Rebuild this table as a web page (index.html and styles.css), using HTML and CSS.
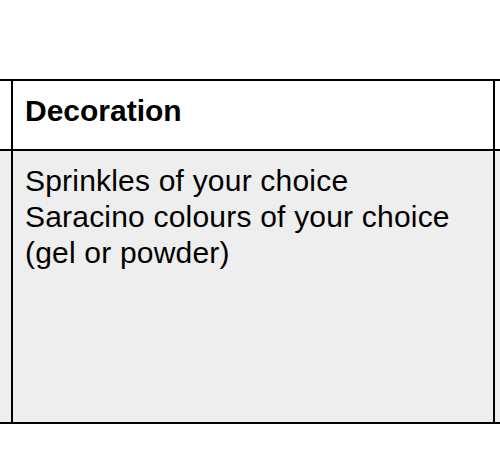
FILE: index.html
```html
<!DOCTYPE html>
<html>
<head>
<meta charset="utf-8">
<link rel="stylesheet" href="styles.css">
</head>
<body>
<div class="table">
  <div class="row head">
    <div class="stub"></div>
    <div class="cell"><strong>Decoration</strong></div>
    <div class="stub"></div>
  </div>
  <div class="row body">
    <div class="stub"></div>
    <div class="cell">Sprinkles of your choice<br>Saracino colours of your choice<br>(gel or powder)</div>
    <div class="stub"></div>
  </div>
</div>
</body>
</html>
```
FILE: styles.css
```css
html, body {
  margin: 0;
  padding: 0;
  background: #ffffff;
}
body {
  padding-top: 79px;
  font-family: "Liberation Sans", Arial, Helvetica, sans-serif;
  font-size: 30px;
  line-height: 36px;
  color: #000;
  width: 500px;
  overflow: hidden;
}
.table {
  border-top: 2px solid #000;
  border-bottom: 2px solid #000;
}
.row {
  display: grid;
  grid-template-columns: 11px 484px 1fr;
}
.head {
  height: 68px;
  border-bottom: 2px solid #000;
}
.body {
  height: 271px;
  background: #eeeeee;
}
.cell {
  border-left: 2px solid #000;
  border-right: 2px solid #000;
  padding: 12px 12px;
}
.body .cell {
  letter-spacing: 0.2px;
}
strong {
  font-weight: bold;
}
```
